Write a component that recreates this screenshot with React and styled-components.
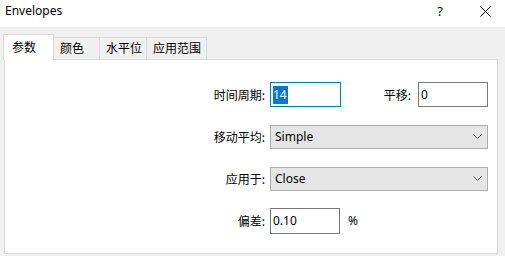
import React from 'react';
import styled, { createGlobalStyle } from 'styled-components';

const GlobalStyle = createGlobalStyle`
  html, body {
    margin: 0;
    padding: 0;
    background: #f0f0f0;
  }
  body {
    font-family: 'Noto Sans', 'Noto Sans CJK SC', sans-serif;
    font-size: 12px;
    color: #000;
  }
`;

const StyledWindow = styled.div`
  width: 505px;
  height: 256px;
  display: flex;
  flex-direction: column;
  background: #f0f0f0;
  overflow: hidden;
`;

const StyledTitleBar = styled.div`
  height: 27px;
  flex: none;
  background: #fff;
  display: flex;
  align-items: center;
  padding: 0 0 5px 5px;
  box-sizing: border-box;
`;

const StyledTitle = styled.div`
  flex: 1;
  font-size: 12px;
  line-height: 16px;
`;

const StyledHelp = styled.div`
  width: 14px;
  text-align: center;
  font-size: 13px;
  line-height: 16px;
  margin-right: 31px;
`;

const StyledClose = styled.div`
  width: 14px;
  height: 14px;
  display: flex;
  align-items: center;
  justify-content: center;
  margin-right: 13px;
`;

const StyledBody = styled.div`
  flex: 1;
  padding: 7px 7px 2px 3px;
  display: flex;
  flex-direction: column;
`;

const StyledTabStrip = styled.div`
  height: 25px;
  display: flex;
  align-items: flex-end;
`;

const StyledTab = styled.div`
  position: relative;
  z-index: ${({ $active }) => ($active ? 1 : 0)};
  box-sizing: border-box;
  width: ${({ $width }) => $width}px;
  height: ${({ $active }) => ($active ? 26 : 22)}px;
  margin-bottom: ${({ $active }) => ($active ? -1 : 0)}px;
  padding: ${({ $active }) => ($active ? '4px 0 0 8px' : '2px 0 0 6px')};
  border: 1px solid #d9d9d9;
  border-bottom: none;
  border-left: ${({ $first, $active }) => ($first || $active ? '1px solid #d9d9d9' : 'none')};
  background: ${({ $active }) => ($active ? '#fff' : '#f0f0f0')};
  font-family: 'Noto Sans CJK SC', sans-serif;
  font-size: 12px;
  line-height: 16px;
  white-space: nowrap;
`;

const StyledPanel = styled.div`
  flex: 1;
  margin-left: 1px;
  background: #fff;
  border: 1px solid #d9d9d9;
  padding: 22px 0 0 0;
  display: flex;
  flex-direction: column;
  gap: 17px;
`;

const StyledRow = styled.div`
  height: 25px;
  display: grid;
  grid-template-columns: 260px 218px;
  column-gap: 5px;
  align-items: center;
`;

const StyledLabel = styled.div`
  text-align: right;
  font-family: 'Noto Sans CJK SC', sans-serif;
  font-size: 12px;
  line-height: 16px;
  white-space: nowrap;
`;

const StyledField = styled.div`
  display: flex;
  align-items: center;
  height: 25px;
`;

const StyledInput = styled.div`
  box-sizing: border-box;
  width: ${({ $width }) => $width}px;
  height: ${({ $height }) => $height || 25}px;
  border: 1px solid ${({ $focused }) => ($focused ? '#0078d7' : '#7a7a7a')};
  background: #fff;
  padding: 0 0 0 2px;
  display: flex;
  align-items: center;
  font-size: 12px;
  line-height: 16px;
`;

const StyledSelection = styled.span`
  background: #0078d7;
  color: #fff;
  padding: 1px 1px 1px 0;
`;

const StyledInlineLabel = styled(StyledLabel)`
  margin-left: auto;
  margin-right: 7px;
`;

const StyledSelect = styled.div`
  box-sizing: border-box;
  width: 218px;
  height: 24px;
  border: 1px solid #adadad;
  background: #e5e5e5;
  display: flex;
  align-items: center;
  justify-content: space-between;
  padding: 0 5px 0 4px;
  font-size: 12px;
  line-height: 16px;
`;

const StyledUnit = styled.span`
  margin-left: 8px;
  font-size: 12px;
`;

const CloseIcon = () => (
  <svg width="11" height="11" viewBox="0 0 11 11">
    <path d="M0.5 0.5 L10.5 10.5 M10.5 0.5 L0.5 10.5" stroke="#000" strokeWidth="1" fill="none" />
  </svg>
);

const Chevron = () => (
  <svg width="9" height="5" viewBox="0 0 9 5">
    <path d="M0.5 0.5 L4.5 4.5 L8.5 0.5" stroke="#555" strokeWidth="1" fill="none" />
  </svg>
);

const tabs = [
  { label: '参数', width: 51 },
  { label: '颜色', width: 46 },
  { label: '水平位', width: 47 },
  { label: '应用范围', width: 60 },
];

const App = () => (
  <>
    <GlobalStyle />
    <StyledWindow>
      <StyledTitleBar>
        <StyledTitle>Envelopes</StyledTitle>
        <StyledHelp>?</StyledHelp>
        <StyledClose>
          <CloseIcon />
        </StyledClose>
      </StyledTitleBar>
      <StyledBody>
        <StyledTabStrip>
          {tabs.map((tab, i) => (
            <StyledTab key={tab.label} $width={tab.width} $active={i === 0} $first={i === 0}>
              {tab.label}
            </StyledTab>
          ))}
        </StyledTabStrip>
        <StyledPanel>
          <StyledRow>
            <StyledLabel>时间周期:</StyledLabel>
            <StyledField>
              <StyledInput $width={71} $focused>
                <StyledSelection>14</StyledSelection>
              </StyledInput>
              <StyledInlineLabel>平移:</StyledInlineLabel>
              <StyledInput $width={70}>0</StyledInput>
            </StyledField>
          </StyledRow>
          <StyledRow>
            <StyledLabel>移动平均:</StyledLabel>
            <StyledField>
              <StyledSelect>
                Simple
                <Chevron />
              </StyledSelect>
            </StyledField>
          </StyledRow>
          <StyledRow>
            <StyledLabel>应用于:</StyledLabel>
            <StyledField>
              <StyledSelect>
                Close
                <Chevron />
              </StyledSelect>
            </StyledField>
          </StyledRow>
          <StyledRow>
            <StyledLabel>偏差:</StyledLabel>
            <StyledField>
              <StyledInput $width={70} $height={26}>0.10</StyledInput>
              <StyledUnit>%</StyledUnit>
            </StyledField>
          </StyledRow>
        </StyledPanel>
      </StyledBody>
    </StyledWindow>
  </>
);

export default App;
